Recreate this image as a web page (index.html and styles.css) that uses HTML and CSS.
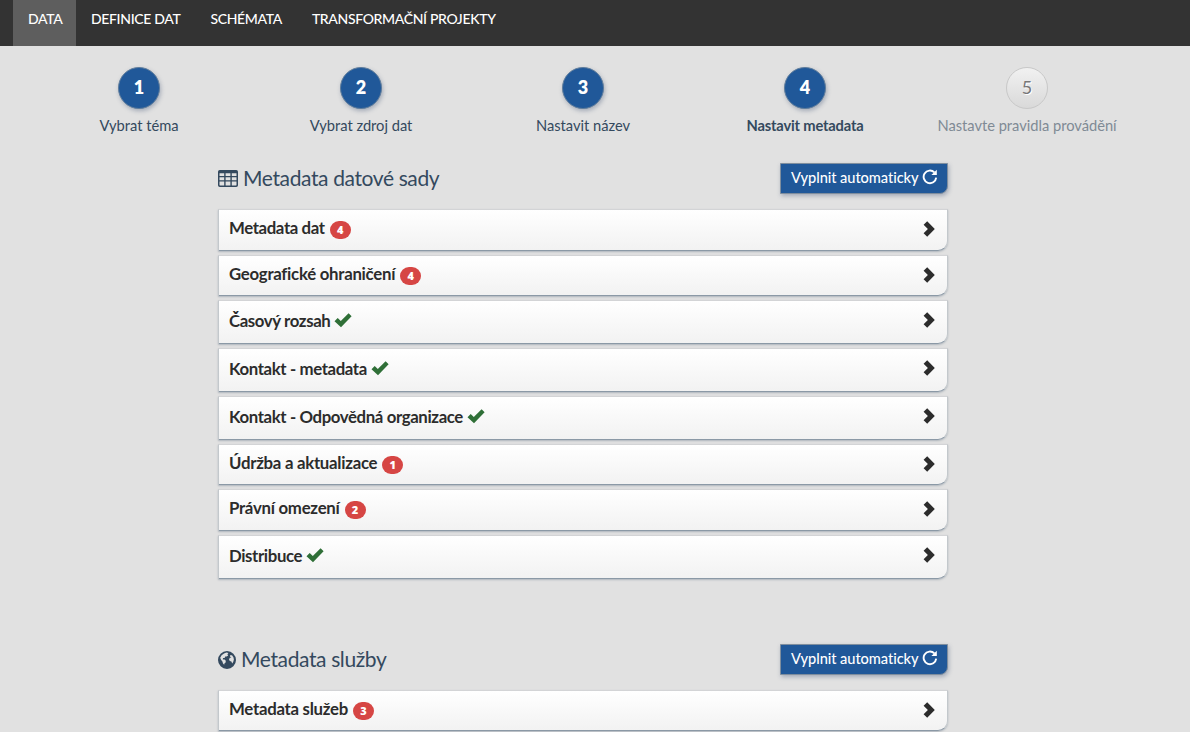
FILE: index.html
```html
<!DOCTYPE html>
<html lang="cs">
<head>
<meta charset="utf-8">
<title>Metadata</title>
<link rel="stylesheet" href="styles.css">
</head>
<body>
<svg class="defs" width="0" height="0" aria-hidden="true">
  <symbol id="chevron" viewBox="0 0 12 16"><path d="M4.2.3 11.8 8 4.2 15.7.6 12.2 4.9 8 .6 3.8Z"/></symbol>
  <symbol id="check" viewBox="0 0 18 15"><path d="M.5 8.2 3.7 5l3.1 3L14.6.3l3 3L7 14.2Z"/></symbol>
  <symbol id="reload" viewBox="0 0 16 16"><path d="M12.4 3.4A6.3 6.3 0 1 0 14.2 8.6" fill="none" stroke="currentColor" stroke-width="1.9"/><path d="M14.8.8v5.3H9.4Z"/></symbol>
  <symbol id="table" viewBox="0 0 20 17"><path fill-rule="evenodd" d="M1.8 0h16.4A1.8 1.8 0 0 1 20 1.8v13.4a1.8 1.8 0 0 1-1.8 1.8H1.8A1.8 1.8 0 0 1 0 15.2V1.8A1.8 1.8 0 0 1 1.8 0ZM1.5 3.2v2.7h4.7V3.2ZM7.6 3.2v2.7h4.8V3.2ZM13.8 3.2v2.7h4.7V3.2ZM1.5 7.2v3h4.7v-3ZM7.6 7.2v3h4.8v-3ZM13.8 7.2v3h4.7v-3ZM1.5 11.5v3.6l.4.4h4.3v-4ZM7.6 11.5v4h4.8v-4ZM13.8 11.5v4h4.3l.4-.4v-3.6Z"/></symbol>
  <symbol id="globe" viewBox="0 0 18 18"><path fill-rule="evenodd" d="M9 0a9 9 0 1 1 0 18A9 9 0 0 1 9 0ZM6 2.4 8.4 1.6 10.4 2 9.4 3.4 10.2 4.4 8.6 5.4 7.2 5.6 6.6 7 5 7 4.8 8.4 6.6 8.6 7.8 9.8 7.6 11.4 6.4 12.4 6.2 13.8 5 12.4 4.4 10.4 3 8.8 2.2 6.8 3.6 4.2ZM12 4.2 14 4.2 15.4 6.2 15.9 8.6 15.2 11 14.2 12.4 13.4 10.6 11.8 10 11 8.4 11.8 6.8 13.4 6.4 12 5.6Z"/></symbol>
</svg>

<nav class="navbar">
  <a class="nav-item active">DATA</a>
  <a class="nav-item">DEFINICE DAT</a>
  <a class="nav-item">SCHÉMATA</a>
  <a class="nav-item">TRANSFORMAČNÍ PROJEKTY</a>
</nav>

<ol class="steps">
  <li class="step"><span class="circle">1</span><span>Vybrat téma</span></li>
  <li class="step"><span class="circle">2</span><span>Vybrat zdroj dat</span></li>
  <li class="step"><span class="circle">3</span><span>Nastavit název</span></li>
  <li class="step current"><span class="circle">4</span><span>Nastavit metadata</span></li>
  <li class="step disabled"><span class="circle">5</span><span>Nastavte pravidla provádění</span></li>
</ol>

<main class="content">
  <section class="group">
    <header class="group-head">
      <h2><svg class="i-table"><use href="#table"/></svg>Metadata datové sady</h2>
      <button class="btn">Vyplnit automaticky<svg class="i-reload"><use href="#reload"/></svg></button>
    </header>
    <div class="panel"><span>Metadata dat</span><b class="badge">4</b><svg class="i-chevron"><use href="#chevron"/></svg></div>
    <div class="panel loose"><span>Geografické ohraničení</span><b class="badge">4</b><svg class="i-chevron"><use href="#chevron"/></svg></div>
    <div class="panel done"><span>Časový rozsah</span><svg class="i-check"><use href="#check"/></svg><svg class="i-chevron"><use href="#chevron"/></svg></div>
    <div class="panel done"><span>Kontakt - metadata</span><svg class="i-check"><use href="#check"/></svg><svg class="i-chevron"><use href="#chevron"/></svg></div>
    <div class="panel done"><span>Kontakt - Odpovědná organizace</span><svg class="i-check"><use href="#check"/></svg><svg class="i-chevron"><use href="#chevron"/></svg></div>
    <div class="panel loose"><span>Údržba a aktualizace</span><b class="badge">1</b><svg class="i-chevron"><use href="#chevron"/></svg></div>
    <div class="panel loose"><span>Právní omezení</span><b class="badge">2</b><svg class="i-chevron"><use href="#chevron"/></svg></div>
    <div class="panel done"><span>Distribuce</span><svg class="i-check"><use href="#check"/></svg><svg class="i-chevron"><use href="#chevron"/></svg></div>
  </section>
  <section class="group">
    <header class="group-head">
      <h2><svg class="i-globe"><use href="#globe"/></svg>Metadata služby</h2>
      <button class="btn">Vyplnit automaticky<svg class="i-reload"><use href="#reload"/></svg></button>
    </header>
    <div class="panel loose"><span>Metadata služeb</span><b class="badge">3</b><svg class="i-chevron"><use href="#chevron"/></svg></div>
  </section>
</main>
</body>
</html>
```

FILE: styles.css
```css
* { box-sizing: border-box; }
html { height: 100%; overflow: hidden; }
body {
  margin: 0;
  height: 100%;
  overflow: hidden;
  background: #e1e1e1;
  color: #34495e;
  font-family: Lato, "Open Sans", sans-serif;
  font-size: 14px;
}
svg { fill: currentColor; flex: none; }
.defs { display: block; position: absolute; }

.navbar {
  display: flex;
  height: 46px;
  padding-left: 13px;
  background: #333;
}
.nav-item {
  height: 46px;
  padding: 9px 15px 0;
  color: #fff;
  font-weight: 500;
  line-height: 20px;
  letter-spacing: -0.34px;
  white-space: nowrap;
}
.nav-item.active { width: 63px; background: #5e5e5e; }

.steps {
  display: grid;
  grid-template-columns: repeat(5, 222px);
  margin: 21px 0 0 28px;
  padding: 0;
  list-style: none;
}
.step {
  display: flex;
  flex-direction: column;
  align-items: center;
  gap: 6px;
  font-size: 14.7px;
  line-height: 20px;
  letter-spacing: -0.02px;
  white-space: nowrap;
}
.circle {
  width: 42px;
  height: 42px;
  border: 1px solid #5f7d9c;
  border-radius: 50%;
  background: #205899;
  box-shadow: 1px 2px 4px rgba(52, 73, 110, .35);
  color: #fff;
  font-size: 18px;
  font-weight: 800;
  line-height: 39px;
  letter-spacing: 0;
  text-align: center;
}
.current { font-weight: 700; letter-spacing: -0.17px; }
.disabled { color: #7f8a95; }
.disabled .circle {
  border-color: #c8c8c8;
  background: linear-gradient(#f1f1f1, #d9d9d9);
  box-shadow: none;
  color: #777;
  font-weight: 400;
  text-shadow: 1px 1px 0 #fff;
}

.content { width: 730px; margin: 28px 0 0 218px; }
.group { margin-bottom: 65px; }
.group-head {
  display: flex;
  justify-content: space-between;
  height: 46px;
}
h2 {
  display: flex;
  align-items: flex-start;
  margin: 0;
  font-size: 21px;
  font-weight: 400;
  line-height: 30px;
  letter-spacing: -0.38px;
}
.i-table { width: 20px; height: 17px; margin: 7px 5px 0 0; }
.i-globe { width: 18px; height: 18px; margin: 7px 5px 0 0; }
.btn {
  display: flex;
  width: 168px;
  height: 31px;
  padding: 0 0 0 10px;
  border: 1px solid #7f8e9e;
  border-radius: 0 0 8px 0;
  background: #205899;
  box-shadow: 1px 2px 4px rgba(52, 73, 110, .35);
  color: #fff;
  font: 500 14.6px/28px Lato, sans-serif;
  letter-spacing: -0.06px;
  white-space: nowrap;
}
.i-reload { width: 16px; height: 16px; margin: 5px 0 0 3px; }

.panel {
  display: flex;
  align-items: flex-start;
  height: 41.55px;
  margin-bottom: 4px;
  padding: 7px 12px 0 10px;
  border-left: 1px solid #c3c8cc;
  border-right: 1px solid #c3c8cc;
  border-top: 1px solid #d3d4d6;
  border-bottom: 1px solid #8b99a6;
  border-radius: 0 0 10px 0;
  background: linear-gradient(#fff, #f2f2f2);
  box-shadow: 0 1px 2px rgba(80, 100, 120, .35);
  color: #2c2c2c;
  font-size: 16.8px;
  font-weight: 700;
  line-height: 22px;
  letter-spacing: -0.38px;
  white-space: nowrap;
}
.panel.loose { letter-spacing: -0.27px; }
.panel.done { height: 43.9px; padding-top: 9px; }
.badge {
  width: 21px;
  height: 18px;
  margin: 4px 0 0 5px;
  border-radius: 9px;
  background: #d64644;
  color: #fff;
  font: 800 11px/18px "Open Sans", sans-serif;
  letter-spacing: 0;
  text-align: center;
}
.i-check { width: 18px; height: 15px; margin: 3px 0 0 4px; color: #2f6f37; }
.i-chevron { width: 12px; height: 16px; margin: 4px 0 0 auto; }
.done .i-chevron { margin-top: 2px; }
```
